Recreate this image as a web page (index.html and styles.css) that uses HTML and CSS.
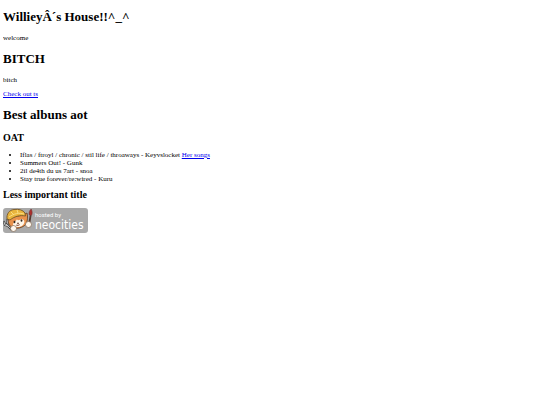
FILE: index.html
```html
<!DOCTYPE html>
<html lang="en">
  <head>
    <meta charset="UTF-8" />
    <meta name="viewport" content="width=device-width, initial-scale=1.0" />
    <title>House</title>
    <link rel="stylesheet" href="styles.css">
  </head>
  <body>
    <h1>WillieyÂ´s House!!^_^</h1>
    <p>welcome</p>

    <h1>BITCH</h1>
    <p>bitch</p>
    <p><a href="ts.html">Check out ts</a></p>

    <h1>Best albuns aot</h1>
    <h2>OAT</h2>
    <ul class="albums">
      <li>Iflas / ftroyl / chronic / stil life / throaways - Keyvslocket <a href="songs.html">Her songs</a></li>
      <li>Summers Out! - Gunk</li>
      <li>2il de4th du us 7art - snoa</li>
      <li>Stay true forever/re:wired - Kuru</li>
    </ul>

    <h2>Less important title</h2>

    <!-- Neocities badge -->
    <a class="badge" href="https://neocities.org" aria-label="hosted by neocities">
      <svg viewBox="0 0 85 25" width="85" height="25">
        <rect width="85" height="25" rx="3" fill="#a9a9a9" />
        <!-- fork -->
        <path d="M3 16L9 22M1 14l1 3 3 1M4 12l1 4" fill="none" stroke="#444" stroke-width="2.2" stroke-linecap="round" />
        <path d="M3 16L9 22M1 14l1 3 3 1M4 12l1 4" fill="none" stroke="#ddd" stroke-width=".8" stroke-linecap="round" />
        <!-- brush -->
        <path d="M26 17L27.500 8" stroke="#553a30" stroke-width="1.8" stroke-linecap="round" />
        <path d="M26.300 7C25.500 4.500 26.500 2.500 28.200 1C29.500 3.500 29.500 6 28.300 7.500z" fill="#ad2f2c" stroke="#633" stroke-width=".5" />
        <!-- cat -->
        <path d="M6 10C4.500 13 5.500 17 8.500 19C13 21.500 20 20 23 16C24.500 13 25 9 24 5L20 7z" fill="#e9924c" stroke="#68452a" stroke-width=".9" />
        <path d="M14 11C15 14 17 11 19 11C22 12 22 15 20 17C17 20 12 19.500 10 17C10 14 13 14 14 11z" fill="#fff6e8" />
        <path d="M4 11C3.500 6 6 2 11 1.500C16 .8 20 2 22 5L22.500 8C17 7 12 8 7 12z" fill="#e9b53c" stroke="#76572a" stroke-width=".9" />
        <path d="M6 9C11 5.500 16 4.500 21 6M8 4l3 3M14 2l1 3" fill="none" stroke="#fae08a" stroke-width=".9" />
        <ellipse cx="11.500" cy="14" rx=".9" ry="1.300" fill="#302822" />
        <ellipse cx="18.500" cy="12.500" rx=".9" ry="1.300" fill="#302822" />
        <path d="M14 15h2l-1 1zM13 17q2 1.500 4-.5" fill="#b55840" stroke="#60402e" stroke-width=".5" />
        <circle cx="10.500" cy="20.500" r="3" fill="#fff8ee" stroke="#765b43" stroke-width=".6" />
        <circle cx="25.500" cy="16.500" r="3" fill="#fff8ee" stroke="#765b43" stroke-width=".6" />
        <text class="badge-small" x="32" y="9">hosted by</text>
        <text class="badge-name" x="32" y="21">neocities</text>
      </svg>
    </a>
  </body>
</html>
```
FILE: styles.css
```css
body {
  margin: 0 3px;
  background-color: white;
  color: black;
  font-family: "Liberation Serif", "Times New Roman", serif;
  font-size: 7px;
  line-height: 8px;
}

h1 {
  margin: 9px 0;
  font-size: 13px;
  line-height: 16px;
}

h2 {
  margin: 6px 0 7px;
  font-size: 10px;
  line-height: 12px;
}

p {
  margin: 6px 0;
}

a {
  color: #0000ee;
}

.albums {
  margin: 6px 0;
  padding-left: 17px;
}

.badge {
  display: inline-block;
}

.badge svg {
  display: block;
}

.badge-small,
.badge-name {
  fill: white;
}

.badge-small {
  font-family: Roboto, sans-serif;
  font-size: 6px;
}

.badge-name {
  font-family: "DejaVu Sans Condensed", "DejaVu Sans", sans-serif;
  font-size: 12px;
}
```
